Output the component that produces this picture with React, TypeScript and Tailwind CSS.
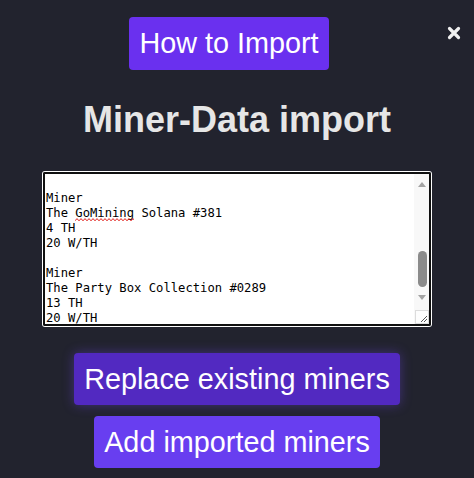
import { useEffect, useRef } from "react"

const miners = [
  { name: "The Crypto Mine #114", th: "6 TH", eff: "20 W/TH" },
  { name: "The Nakamoto Vault #072", th: "8 TH", eff: "20 W/TH" },
  { name: "The Halving Cave #455", th: "5 TH", eff: "20 W/TH" },
  { name: "The Hash Forge #1207", th: "7 TH", eff: "20 W/TH" },
  { name: "The GoMining Solana #381", th: "4 TH", eff: "20 W/TH" },
  { name: "The Party Box Collection #0289", th: "13 TH", eff: "20 W/TH" },
]

const importText =
  miners.map((m) => `Miner\n${m.name}\n${m.th}\n${m.eff}`).join("\n\n") + "\n"

// zigzag for the spell-check underline
const squiggle = Array.from({ length: 31 }, (_, i) => `${i * 2},${i % 2 ? 0.6 : 2.8}`).join(" ")

export default function App() {
  const areaRef = useRef<HTMLTextAreaElement>(null)

  // caret after the last "W/TH", view scrolled almost to the end
  useEffect(() => {
    const el = areaRef.current
    if (!el) return
    el.focus()
    const end = el.value.length - 1
    el.setSelectionRange(end, end)
    el.scrollTop = el.scrollHeight - el.clientHeight - 18
  }, [])

  return (
    <div className="relative flex min-h-[478px] w-full flex-col items-center bg-[#22232e] pt-[17px] font-['Liberation_Sans',Arial,sans-serif]">
      {/* Закрыть */}
      <button className="absolute right-[13px] top-[25px] flex h-[15px] w-[15px] items-center justify-center text-[#f0f0f0]">
        <svg viewBox="0 0 14 14" className="h-[14px] w-[14px]">
          <path d="M2.5 2.5 L11.5 11.5 M11.5 2.5 L2.5 11.5" stroke="currentColor" strokeWidth="3.2" strokeLinecap="round" />
        </svg>
      </button>

      <button className="mr-[16px] h-[53px] rounded-[4px] bg-[#6a30ef] px-[10px] text-[28.8px] leading-[33px] text-white">
        How to Import
      </button>

      <h1 className="mt-[29px] text-[36px] font-bold leading-[41px] text-[#e6e6e6]">
        Miner-Data import
      </h1>

      <div className="relative mt-[32px]">
        <textarea
          ref={areaRef}
          defaultValue={importText}
          spellCheck={false}
          className="block h-[154px] w-[388px] rounded-[2px] border-2 border-[#101010] bg-white py-[1px] pl-px pr-[17px] font-['DejaVu_Sans_Mono',Consolas,monospace] text-[12.2px] leading-[15px] text-black shadow-[0_0_0_1px_#ffffff] outline-none"
        />
        {/* подчёркивание орфографии */}
        <svg className="pointer-events-none absolute left-[32px] top-[46px] h-[4px] w-[59px]" viewBox="0 0 59 4">
          <polyline points={squiggle} fill="none" stroke="#e0201c" strokeWidth="1" />
        </svg>

        {/* полоса прокрутки */}
        <div className="pointer-events-none absolute inset-y-[2px] right-[2px] flex w-[15px] flex-col items-center bg-[#f8f8f8]">
          <div className="mt-[8px] h-0 w-0 border-x-[4px] border-b-[5px] border-x-transparent border-b-[#a3a3a3]" />
          <div className="ml-px mt-[64px] h-[36px] w-[9px] rounded-full bg-[#8b8b8b]" />
          <div className="mt-[8px] h-0 w-0 border-x-[4px] border-t-[5px] border-x-transparent border-t-[#a3a3a3]" />
          <div className="mt-auto h-[14px] w-[14px] self-end border border-[#dcdcdc] bg-[#fdfdfd]">
            <svg viewBox="0 0 12 12" className="h-full w-full">
              <path d="M11 5 L5 11 M11 8 L8 11" stroke="#555" strokeWidth="1" />
            </svg>
          </div>
        </div>
      </div>

      <button className="mt-[27px] h-[52px] rounded-[4px] bg-[#5229c1] px-[10px] text-[28.8px] leading-[33px] text-white shadow-[0_0_12px_rgba(112,72,240,0.4)]">
        Replace existing miners
      </button>

      <button className="mt-[11px] h-[52px] rounded-[4px] bg-[#683ef0] px-[10px] text-[28.8px] leading-[33px] text-white">
        Add imported miners
      </button>
    </div>
  )
}
